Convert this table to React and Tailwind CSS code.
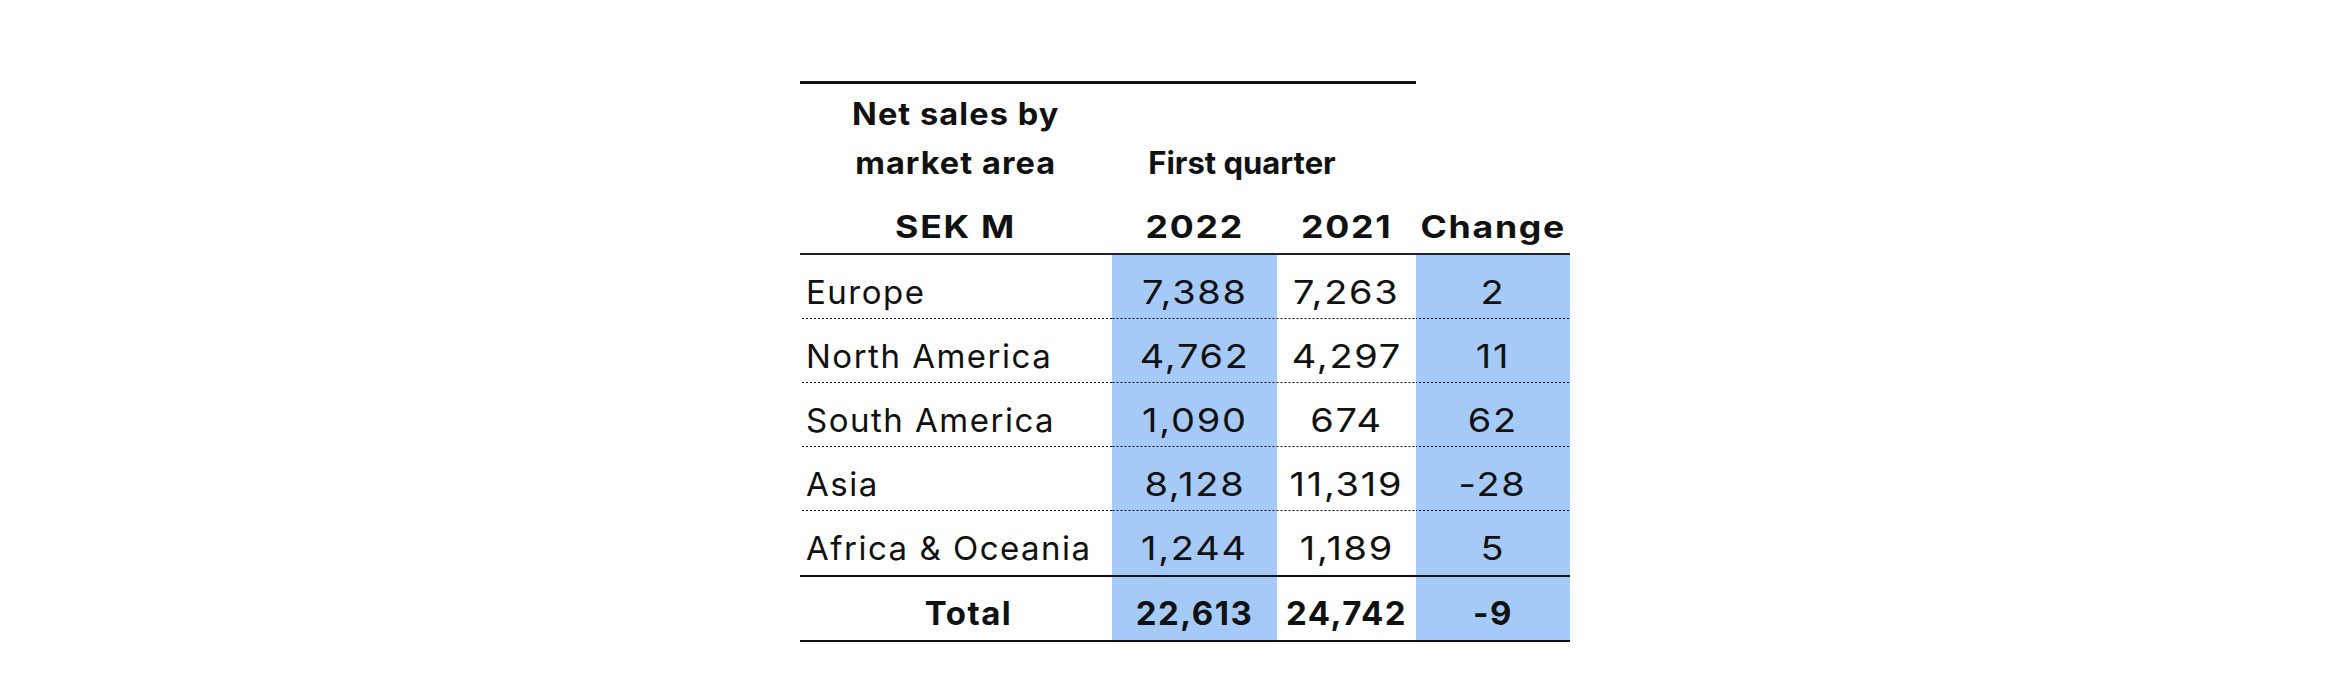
const ROWS = [
  { area: 'Europe', y22: '7,388', y21: '7,263', change: '2' },
  { area: 'North America', y22: '4,762', y21: '4,297', change: '11' },
  { area: 'South America', y22: '1,090', y21: '674', change: '62' },
  { area: 'Asia', y22: '8,128', y21: '11,319', change: '-28' },
  { area: 'Africa & Oceania', y22: '1,244', y21: '1,189', change: '5' },
]

// label | 2022 | 2021 | change
const COLS = 'grid grid-cols-[312px_165px_139px_154px]'
const DOTS = 'bg-[linear-gradient(to_right,#111_50%,transparent_50%)] bg-[length:4px_1px] bg-bottom bg-repeat-x'
const BLUE = 'bg-[#a6caf8]'
const NUM = 'pt-[17px] text-center'

// the report font has wider figures than Inter
function Wide({ children }) {
  return <span className="inline-block scale-x-[1.15] tracking-[1.5px]">{children}</span>
}

function DataRow({ row, last }) {
  const line = last ? '' : DOTS
  return (
    <div className={`${COLS} h-[64px] text-[33px] leading-[40px]`}>
      <div className={`${line} pt-[17px] pl-[6px] tracking-[1.5px]`}>{row.area}</div>
      <div className={`${line} ${BLUE} ${NUM}`}><Wide>{row.y22}</Wide></div>
      <div className={`${line} ${NUM}`}><Wide>{row.y21}</Wide></div>
      <div className={`${line} ${BLUE} ${NUM}`}><Wide>{row.change}</Wide></div>
    </div>
  )
}

export default function App() {
  return (
    <div className="min-h-[680px] bg-white text-[#111] font-['Inter','Liberation_Sans',sans-serif]">
      <div className="ml-[800px] pt-[81px] w-[770px]">
        <div className="w-[616px] h-[3px] bg-[#111]" />

        {/* header */}
        <div className="font-bold text-[31px] leading-[49px]">
          <div className={`${COLS} pt-[5px]`}>
            <div className="text-center">
              <span className="inline-block scale-x-[1.05] tracking-[1px]">Net sales by<br />market area</span>
            </div>
            <div className="col-span-2 flex items-end justify-center pr-[44px]">First quarter</div>
            <div />
          </div>
          <div className={`${COLS} pt-[15px]`}>
            <div className="text-center"><Wide>SEK M</Wide></div>
            <div className="text-center"><Wide>2022</Wide></div>
            <div className="text-center"><Wide>2021</Wide></div>
            <div className="text-center"><Wide>Change</Wide></div>
          </div>
        </div>
        <div className="h-[2px] mt-[2px] bg-[#222]" />

        {ROWS.map((row, i) => (
          <DataRow key={row.area} row={row} last={i === ROWS.length - 1} />
        ))}

        <div className="h-[2px] bg-[#111]" />
        <div className={`${COLS} h-[63px] text-[33px] leading-[40px] tracking-[1.5px] font-bold`}>
          <div className="pt-[16px] pl-[25px] text-center">Total</div>
          <div className={`${BLUE} pt-[16px] text-center`}>22,613</div>
          <div className="pt-[16px] text-center">24,742</div>
          <div className={`${BLUE} pt-[16px] text-center`}>-9</div>
        </div>
        <div className="h-[2px] bg-[#111]" />
      </div>
    </div>
  )
}
